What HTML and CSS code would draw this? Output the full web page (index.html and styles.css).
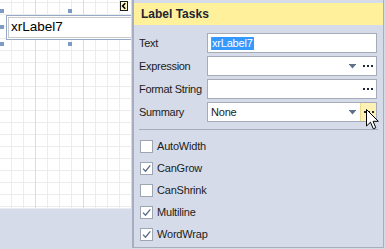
FILE: index.html
```html
<!DOCTYPE html>
<html>
<head>
<meta charset="utf-8">
<link rel="stylesheet" href="styles.css">
</head>
<body>
<div class="app">
  <div class="design">
    <div class="canvas">
      <div class="label-box"><div class="label-inner">xrLabel7</div></div>
      <div class="handle h1"></div>
      <div class="handle h2"></div>
      <div class="handle h3"></div>
      <div class="handle h4"></div>
      <div class="handle h5"></div>
      <div class="collapse"><svg width="6" height="8" viewBox="0 0 6 8"><path d="M4.3 1.2 L1.6 4 L4.3 6.8" fill="none" stroke="#000" stroke-width="1.6"/></svg></div>
    </div>
  </div>
  <div class="panel">
    <div class="header">Label Tasks</div>
    <div class="props">
      <div class="row">
        <span class="lbl">Text</span>
        <div class="field"><span class="caret"></span><span class="sel">xrLabel7</span></div>
      </div>
      <div class="row">
        <span class="lbl">Expression</span>
        <div class="field">
          <span class="val"></span>
          <span class="drop"><svg width="7" height="5" viewBox="0 0 7 5"><path d="M0 0 H7 V1 H0 Z M0.5 1 L6.5 1 L3.5 4.5 Z" fill="#5f7089"/></svg></span>
          <span class="dots"><i></i><i></i><i></i></span>
        </div>
      </div>
      <div class="row">
        <span class="lbl">Format String</span>
        <div class="field">
          <span class="val"></span>
          <span class="dots"><i></i><i></i><i></i></span>
        </div>
      </div>
      <div class="row">
        <span class="lbl">Summary</span>
        <div class="field">
          <span class="val">None</span>
          <span class="drop"><svg width="7" height="5" viewBox="0 0 7 5"><path d="M0 0 H7 V1 H0 Z M0.5 1 L6.5 1 L3.5 4.5 Z" fill="#5f7089"/></svg></span>
          <span class="dots hot"><i></i><i></i><i></i></span>
        </div>
      </div>
    </div>
    <div class="sep"></div>
    <div class="checks">
      <div class="check"><span class="box"></span><span>AutoWidth</span></div>
      <div class="check"><span class="box"><svg width="11" height="11" viewBox="0 0 11 11"><path d="M2 5.6 L4.5 8.2 L9.3 2.4" fill="none" stroke="#5b6b84" stroke-width="1.3"/></svg></span><span>CanGrow</span></div>
      <div class="check"><span class="box"></span><span>CanShrink</span></div>
      <div class="check"><span class="box"><svg width="11" height="11" viewBox="0 0 11 11"><path d="M2 5.6 L4.5 8.2 L9.3 2.4" fill="none" stroke="#5b6b84" stroke-width="1.3"/></svg></span><span>Multiline</span></div>
      <div class="check"><span class="box"><svg width="11" height="11" viewBox="0 0 11 11"><path d="M2 5.6 L4.5 8.2 L9.3 2.4" fill="none" stroke="#5b6b84" stroke-width="1.3"/></svg></span><span>WordWrap</span></div>
    </div>
  </div>
</div>
<svg class="cursor" width="14" height="22" viewBox="0 0 14 22"><path d="M0.5 0.5 L0.5 17 L4.5 13.2 L7.3 19.8 L9.8 18.8 L7.1 12.3 L12.3 12.3 Z" fill="#fff" stroke="#000" stroke-width="1" stroke-linejoin="miter"/></svg>
</body>
</html>
```
FILE: styles.css
```css
html, body {
  margin: 0;
  padding: 0;
}
body {
  width: 385px;
  height: 249px;
  overflow: hidden;
  background: #d6dbe9;
  font-family: "Liberation Sans", Arial, sans-serif;
  font-size: 11px;
  color: #1b1b1b;
  position: relative;
}
.app {
  display: flex;
  width: 385px;
  height: 249px;
}
.design {
  width: 132px;
  flex: none;
}
.canvas {
  position: relative;
  width: 131px;
  height: 208px;
  overflow: hidden;
  background-color: #fff;
  background-image:
    repeating-linear-gradient(to right, transparent 0 35px, #dcdcdc 35px 36px, transparent 36px 48px),
    repeating-linear-gradient(to right, transparent 0 11px, #ececec 11px 12px),
    repeating-linear-gradient(to bottom, transparent 0 2px, #ececec 2px 3px, transparent 3px 12px);
  border-bottom: 1px solid #e9ebf0;
}
.label-box {
  position: absolute;
  left: 6px;
  top: 15px;
  width: 150px;
  height: 25px;
  box-sizing: border-box;
  border: 1px solid #97a9c6;
  background: #fff;
}
.label-inner {
  box-sizing: border-box;
  height: 21px;
  margin: 1px 0 0 1px;
  border: 1px solid #c9c9c9;
  padding-left: 2px;
  font-family: "Liberation Sans", Arial, sans-serif;
  font-size: 13.5px;
  line-height: 18px;
  color: #000;
}
.handle {
  position: absolute;
  width: 4px;
  height: 4px;
  background: #7f9ac4;
}
.h1 { left: 0; top: 9px; }
.h2 { left: 68px; top: 9px; }
.h3 { left: 0; top: 25px; }
.h4 { left: 0; top: 42px; }
.h5 { left: 68px; top: 42px; }
.collapse {
  position: absolute;
  left: 120px;
  top: 1px;
  width: 8px;
  height: 10px;
  box-sizing: border-box;
  border: 1px solid #1e1e1e;
  background: #fff8c6;
  display: flex;
  align-items: center;
  justify-content: center;
}
.collapse svg { display: block; }
.panel {
  width: 252px;
  height: 248px;
  flex: none;
  box-sizing: border-box;
  border-left: 2px solid #a7aebf;
  border-right: 1px solid #a7aebf;
  border-bottom: 1px solid #a7aebf;
  padding-top: 3px;
}
.header {
  height: 22px;
  background: #fff09c;
  padding-left: 7px;
  font-weight: bold;
  font-size: 12px;
  line-height: 22px;
  color: #1d2433;
}
.props {
  margin-top: 8px;
  display: flex;
  flex-direction: column;
  gap: 3px;
}
.row {
  display: flex;
  align-items: center;
  height: 20px;
}
.lbl {
  width: 68px;
  padding-left: 5px;
  flex: none;
  letter-spacing: -0.3px;
  white-space: nowrap;
}
.field {
  width: 170px;
  height: 20px;
  box-sizing: border-box;
  border: 1px solid #a5acb8;
  background: #fff;
  display: flex;
  align-items: center;
  padding-left: 3px;
}
.caret {
  width: 1px;
  height: 13px;
  background: #e67a24;
  flex: none;
}
.sel {
  background: #3399ff;
  color: #fff;
  line-height: 13px;
  padding-right: 1px;
  letter-spacing: -0.2px;
}
.val {
  flex: 1;
  letter-spacing: -0.2px;
}
.drop {
  width: 16px;
  height: 18px;
  display: flex;
  align-items: center;
  justify-content: center;
  flex: none;
}
.drop svg { display: block; }
.dots {
  width: 16px;
  height: 18px;
  display: flex;
  align-items: center;
  justify-content: center;
  gap: 2px;
  flex: none;
  box-sizing: border-box;
}
.dots i {
  display: block;
  width: 2px;
  height: 2px;
  background: #1d273a;
}
.dots.hot {
  background: #fdf1b6;
  border-left: 1px solid #eed98d;
}
.sep {
  margin: 7px 5px 0 5px;
  height: 1px;
  background: #a5acb8;
}
.checks {
  margin-top: 5px;
  display: flex;
  flex-direction: column;
}
.check {
  height: 22px;
  display: flex;
  align-items: center;
  padding-left: 6px;
  gap: 4px;
}
.check span:last-child {
  letter-spacing: -0.2px;
}
.box {
  width: 13px;
  height: 13px;
  box-sizing: border-box;
  border: 1px solid #9ea5b2;
  background: #fff;
  display: flex;
  align-items: center;
  justify-content: center;
  flex: none;
}
.box svg { display: block; }
.cursor {
  position: absolute;
  left: 366px;
  top: 109px;
}
```
